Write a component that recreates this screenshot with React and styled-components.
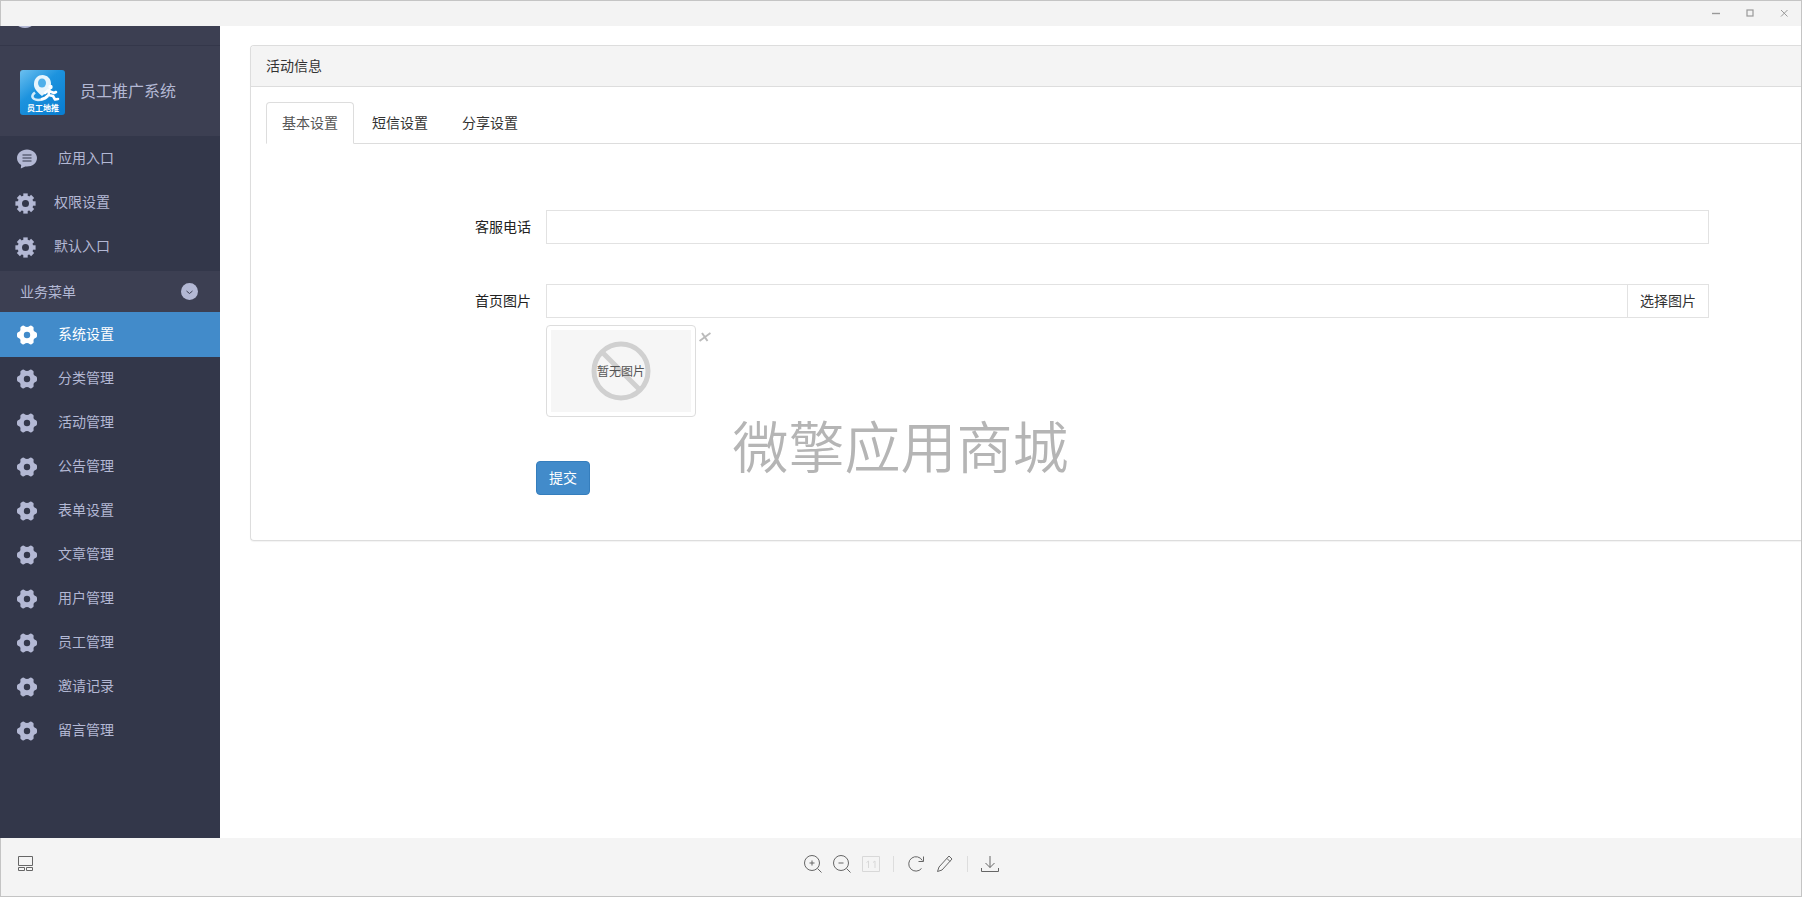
import { useState } from "react";
import styled, { createGlobalStyle } from "styled-components";

const menus = ["系统设置", "分类管理", "活动管理", "公告管理", "表单设置", "文章管理", "用户管理", "员工管理", "邀请记录", "留言管理"];

const entries = [
  { label: "应用入口", icon: "chat" },
  { label: "权限设置", icon: "cog" },
  { label: "默认入口", icon: "cog" },
];

const tabs = ["基本设置", "短信设置", "分享设置"];

const GlobalStyle = createGlobalStyle`
  *, *::before, *::after { box-sizing: border-box; }
  body {
    margin: 0;
    font: 14px/20px "Liberation Sans", "Noto Sans CJK SC", sans-serif;
    color: #333;
    background: #fff;
  }
  button, input { font: inherit; color: inherit; }
  button { cursor: pointer; padding: 0; border: 0; background: none; }
  a { color: inherit; text-decoration: none; }
  svg { display: block; flex: none; }
`;

const Window = styled.div`
  position: relative;
  display: flex;
  flex-direction: column;
  height: 100vh;
  border: 1px solid #c4c4c4;
  border-left: 0;
  overflow: hidden;
`;
const TitleBar = styled.header`
  display: flex;
  justify-content: flex-end;
  flex: none;
  height: 25px;
  padding-bottom: 2px;
  border-left: 1px solid #c4c4c4;
  background: #f3f3f3;
`;
const WindowButton = styled.button`width: 34px; display: grid; place-items: center; color: #999;`;
const Body = styled.div`display: flex; flex: 1; min-height: 0;`;

const Sidebar = styled.nav`
  flex: none;
  width: 220px;
  background: #33374a;
  color: #b3b8d4;
  overflow: hidden;
`;
const Scrolled = styled.div`
  height: 20px;
  padding-left: 18px;
  background: #3c3f52;
  border-bottom: 1px solid #34374a;
`;
const Brand = styled.div`
  display: flex;
  align-items: center;
  gap: 15px;
  height: 90px;
  padding: 2px 0 0 20px;
  background: #3c3f52;
  font-size: 16px;
`;
const Menu = styled.ul`list-style: none; margin: 0; padding: 0 0 3px;`;
const MenuLink = styled.a`
  display: flex;
  align-items: center;
  gap: ${(p) => (p.$narrow ? 18 : 21)}px;
  height: 44px;
  padding-left: ${(p) => (p.$narrow ? 15 : 17)}px;
  ${(p) => p.$active && "background: #428bca; box-shadow: 0 1px #428bca; color: #fff;"}
`;
const MenuIcon = styled.span`margin-top: 2px;`;
const Section = styled.button`
  display: flex;
  align-items: center;
  justify-content: space-between;
  width: 100%;
  height: 41px;
  padding: 0 22px 0 20px;
  background: #3c3f52;
`;

const Main = styled.main`flex: 1; min-width: 0; padding: 19px 0 0 30px;`;
const Panel = styled.section`
  border: 1px solid #ddd;
  border-right: 0;
  border-radius: 4px 0 0 4px;
  box-shadow: 0 1px 1px rgba(0, 0, 0, 0.05);
`;
const PanelHeading = styled.h3`
  margin: 0;
  padding: 10px 15px;
  border-bottom: 1px solid #ddd;
  border-top-left-radius: 3px;
  background: #f4f4f4;
  font-size: 14px;
  font-weight: 400;
`;
const PanelBody = styled.div`padding: 15px 0 45px 15px;`;
const Tabs = styled.div`display: flex; gap: 2px; border-bottom: 1px solid #ddd;`;
const Tab = styled.button`
  margin-bottom: -1px;
  padding: 10px 15px;
  border: 1px solid ${(p) => (p.$active ? "#ddd" : "transparent")};
  border-bottom-color: ${(p) => (p.$active ? "#fff" : "transparent")};
  border-radius: 4px 4px 0 0;
  color: ${(p) => (p.$active ? "#555" : "#333")};
`;
const Form = styled.form`padding: 66px 92px 0 0;`;
const Row = styled.div`
  display: grid;
  grid-template-columns: 265px 1fr;
  column-gap: 15px;
  margin-bottom: 40px;
`;
const Label = styled.label`line-height: 34px; text-align: right; color: #222;`;
const Input = styled.input`
  display: block;
  width: 100%;
  min-width: 0;
  height: 34px;
  padding: 6px 12px;
  border: 1px solid #e2e2e2;
  background: #fff;
`;
const InputGroup = styled.div`display: flex;`;
const PickButton = styled.button`
  flex: none;
  padding: 0 12px;
  border: 1px solid #e2e2e2;
  border-left: 0;
`;
const Preview = styled.div`display: flex; align-items: flex-start; gap: 2px; margin-top: 7px;`;
const Thumb = styled.figure`
  margin: 0;
  padding: 4px;
  width: 150px;
  height: 92px;
  border: 1px solid #ddd;
  border-radius: 4px;
`;
const Remove = styled.button`width: 13px; height: 24px; display: grid; place-items: center; color: #bbb;`;
const Actions = styled.div`padding: 4px 0 0 270px;`;
const Submit = styled.button`
  display: block;
  height: 34px;
  padding: 0 12px;
  border: 1px solid #357ebd;
  border-radius: 4px;
  background: #428bca;
  color: #fff;
`;

const Watermark = styled.div`
  position: absolute;
  inset: 0;
  display: grid;
  place-items: center;
  pointer-events: none;
  font-size: 56px;
  font-weight: 350;
  line-height: 60px;
  color: #b5b5b5;
`;

const Toolbar = styled.footer`
  display: grid;
  grid-template-columns: 1fr auto 1fr;
  align-items: start;
  flex: none;
  height: 58px;
  padding: 16px 16px 0;
  border-left: 1px solid #c4c4c4;
  background: #f4f4f4;
`;
const Tools = styled.div`display: flex; align-items: center; gap: 9px;`;
const ToolButton = styled.button`
  width: 20px;
  height: 20px;
  color: ${(p) => (p.disabled ? "#d8d8d8" : "#666")};
`;
const Divider = styled.span`width: 1px; height: 16px; margin: 0 3px; background: #ddd;`;

const Cog = () => (
  <svg width="21" height="21" viewBox="0 0 21 21" fill="none" stroke="currentColor">
    {[0, 45, 90, 135, 180, 225, 270, 315].map((a) => (
      <path key={a} d="M10.5 4V.4" strokeWidth="4.4" transform={`rotate(${a} 10.5 10.5)`} />
    ))}
    <circle cx="10.5" cy="10.5" r="5.7" strokeWidth="4.4" />
  </svg>
);

const Gear = () => (
  <svg width="20" height="20" viewBox="0 0 20 20" fill="currentColor" fillRule="evenodd">
    <path d="M5.4.8Q6.5.2 7.4.9Q8.4 2 10 2T12.6.9Q13.5.2 14.6.8L16 1.7Q16.9 2.4 16.6 3.5Q16.2 5.1 17 6T19 7.3Q20 7.8 20 9V11Q20 12.2 19 12.7Q17.7 13.1 17 14T16.6 16.5Q16.9 17.6 16 18.3L14.6 19.2Q13.5 19.8 12.6 19.1Q11.6 18 10 18T7.4 19.1Q6.5 19.8 5.4 19.2L4 18.3Q3.1 17.6 3.4 16.5Q3.8 14.9 3 14T1 12.7Q0 12.2 0 11V9Q0 7.8 1 7.3Q2.3 6.9 3 6T3.4 3.5Q3.1 2.4 4 1.7ZM10 6.8A3.2 3.2 0 1 0 10 13.2A3.2 3.2 0 1 0 10 6.8Z" />
  </svg>
);

const Chat = () => (
  <svg width="20" height="20" viewBox="0 0 20 20">
    <path d="M10 .5C4.5.5 0 4.2 0 9C0 12 1.6 14.5 4.200 16L3.8 19.5L8.2 17.4C14.5 18.2 20 14.5 20 9C20 4.2 15.5.5 10 .5Z" fill="currentColor" />
    <path d="M5.5 6H14.5M5.5 9H14.5M5.5 12H14.5" stroke="#33374a" strokeWidth="1.2" />
  </svg>
);

const Logo = () => (
  <svg width="45" height="45" viewBox="0 0 45 45" role="img" aria-label="员工地推">
    <defs>
      <linearGradient id="logoBg" x1="0" y1="0" x2="0.8" y2="1">
        <stop offset="0" stopColor="#6cc0f0" />
        <stop offset="0.45" stopColor="#1d93de" />
        <stop offset="1" stopColor="#0a7fd2" />
      </linearGradient>
    </defs>
    <rect width="45" height="45" rx="3" fill="url(#logoBg)" />
    <path d="M22 26C16 21 13.5 17.5 14 13.5C14.5 8 18 5 22.5 5S31 8.500 31 13.500C31 18 27 22 22 26Z" fill="#e6f5fd" />
    <ellipse cx="22" cy="13" rx="4" ry="4.6" fill="#4fb0ea" />
    <path d="M15 22.5C10.500 26 12 29.500 18 30C23 30 26 28 28 26" fill="none" stroke="#d2ecfb" strokeWidth="2.5" />
    <circle cx="30.5" cy="17" r="2.2" fill="#fff" />
    <path d="M29.500 20L28.500 25L33 26L35 29.500L38 29M28.500 25L25 28L22 29M29 21L34 23L36 22M28 20.500L25 23" fill="none" stroke="#fff" strokeWidth="2.6" strokeLinejoin="round" strokeLinecap="round" />
    <text x="23" y="41" textAnchor="middle" fontSize="8" fontWeight="700" fill="#fff">员工地推</text>
  </svg>
);

const NoPicture = () => (
  <svg width="140" height="82" viewBox="0 0 140 82">
    <rect width="140" height="82" fill="#f6f6f6" />
    <circle cx="70" cy="41" r="27" fill="none" stroke="#d0d0d0" strokeWidth="5" />
    <path d="M51 22L89 60" stroke="#d0d0d0" strokeWidth="5" />
    <text x="70" y="46" textAnchor="middle" fontSize="12" fill="#555">暂无图片</text>
  </svg>
);

const Stroke = ({ size = 20, width = 1, children }) => (
  <svg width={size} height={size} viewBox={`0 0 ${size} ${size}`} fill="none" stroke="currentColor" strokeWidth={width}>
    {children}
  </svg>
);

const SideLink = ({ label, icon, active, onClick }) => (
  <li>
    <MenuLink href="#" $narrow={icon === "cog"} $active={active} onClick={onClick}>
      <MenuIcon>{icon === "chat" ? <Chat /> : icon === "cog" ? <Cog /> : <Gear />}</MenuIcon>
      {label}
    </MenuLink>
  </li>
);

const App = () => {
  const [menu, setMenu] = useState(0);
  const [tab, setTab] = useState(0);

  return (
    <Window>
      <GlobalStyle />
      <TitleBar>
        <WindowButton aria-label="最小化"><Stroke size={10}><path d="M1 5.5H9" strokeWidth="1.4" /></Stroke></WindowButton>
        <WindowButton aria-label="最大化"><Stroke size={10}><rect x="2" y="2" width="6" height="6" strokeWidth="1.2" /></Stroke></WindowButton>
        <WindowButton aria-label="关闭"><Stroke size={10}><path d="M2 2L8.5 8.5M8.5 2L2 8.5" /></Stroke></WindowButton>
      </TitleBar>

      <Body>
        <Sidebar>
          <Scrolled>
            <svg width="14" height="2" viewBox="0 0 14 2"><ellipse cx="7" cy="-1" rx="7" ry="3" fill="#b3b8d4" /></svg>
          </Scrolled>
          <Brand><Logo />员工推广系统</Brand>
          <Menu>
            {entries.map((e) => <SideLink key={e.label} {...e} />)}
          </Menu>
          <Section>
            业务菜单
            <svg width="17" height="17" viewBox="0 0 17 17">
              <circle cx="8.5" cy="8.5" r="8.5" fill="#b3b8d4" />
              <path d="M5.5 8L8.5 10.5L11.5 8" fill="none" stroke="#3c3f52" />
            </svg>
          </Section>
          <Menu>
            {menus.map((label, i) => (
              <SideLink key={label} label={label} active={i === menu} onClick={() => setMenu(i)} />
            ))}
          </Menu>
        </Sidebar>

        <Main>
          <Panel>
            <PanelHeading>活动信息</PanelHeading>
            <PanelBody>
              <Tabs role="tablist">
                {tabs.map((label, i) => (
                  <Tab key={label} role="tab" aria-selected={i === tab} $active={i === tab} onClick={() => setTab(i)}>{label}</Tab>
                ))}
              </Tabs>
              <Form onSubmit={(e) => e.preventDefault()}>
                <Row>
                  <Label htmlFor="phone">客服电话</Label>
                  <Input id="phone" type="text" />
                </Row>
                <Row>
                  <Label htmlFor="cover">首页图片</Label>
                  <div>
                    <InputGroup>
                      <Input id="cover" type="text" />
                      <PickButton type="button">选择图片</PickButton>
                    </InputGroup>
                    <Preview>
                      <Thumb><NoPicture /></Thumb>
                      <Remove type="button" aria-label="删除图片">
                        <Stroke size={12} width={2}><path d="M3 2L8.5 10M11.5 2L.5 10" /></Stroke>
                      </Remove>
                    </Preview>
                  </div>
                </Row>
                <Actions><Submit type="submit">提交</Submit></Actions>
              </Form>
            </PanelBody>
          </Panel>
        </Main>
      </Body>

      <Toolbar>
        <ToolButton aria-label="缩略图">
          <Stroke><path d="M1.5 2.5H15.5V11.5H1.5ZM1.5 13.5H7.5V16.5H1.5ZM9.5 13.5H15.5V16.5H9.5Z" /></Stroke>
        </ToolButton>
        <Tools>
          <ToolButton aria-label="放大"><Stroke><circle cx="9" cy="9" r="7.5" /><path d="M14.5 14.5L18.5 18.5M6.5 9H11.5M9 6.5V11.5" /></Stroke></ToolButton>
          <ToolButton aria-label="缩小"><Stroke><circle cx="9" cy="9" r="7.5" /><path d="M14.5 14.5L18.5 18.5M6.5 9H11.5" /></Stroke></ToolButton>
          <ToolButton aria-label="原始大小" disabled>
            <Stroke><path d="M1.5 2.5H18.5V17.5H1.5ZM5.5 8.5L7.5 7V14M12 8.5L14 7V14" /></Stroke>
          </ToolButton>
          <Divider />
          <ToolButton aria-label="旋转"><Stroke><path d="M15.5 14.5A7.2 7.2 0 1 1 16.3 6.5M17.5 2.5V7.5H12.5" /></Stroke></ToolButton>
          <ToolButton aria-label="编辑"><Stroke><path d="M2.5 17.5L4 13L14 2L17 5L7 16ZM12 4.5L15 7.5" /></Stroke></ToolButton>
          <Divider />
          <ToolButton aria-label="下载"><Stroke><path d="M10 2V13.5M5.5 9L10 13.5L14.5 9M1.5 14V17.5H18.5V14" /></Stroke></ToolButton>
        </Tools>
      </Toolbar>

      <Watermark>微擎应用商城</Watermark>
    </Window>
  );
};

export default App;
